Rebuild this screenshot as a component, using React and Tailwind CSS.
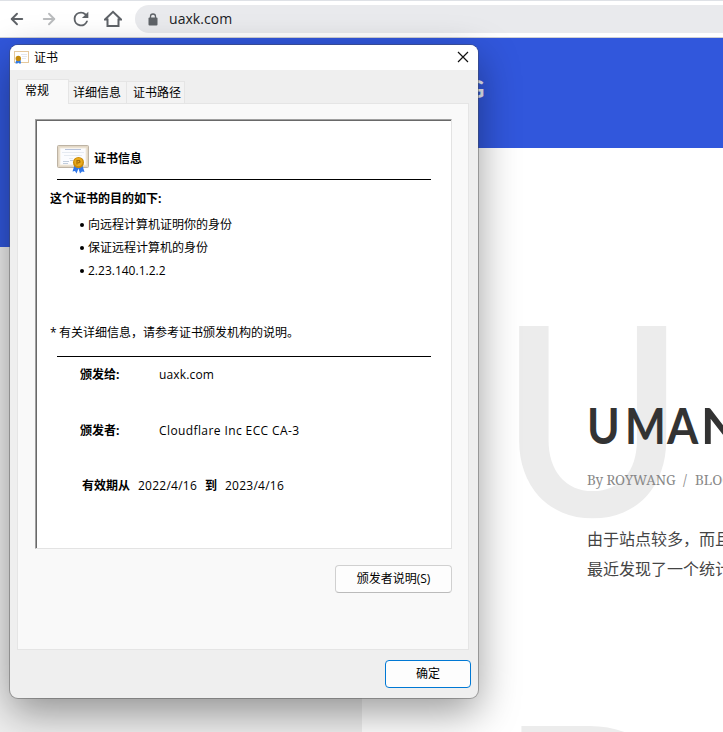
import { ArrowLeft, ArrowRight } from "lucide-react";

const purposes = ["向远程计算机证明你的身份", "保证远程计算机的身份", "2.23.140.1.2.2"];

function CertIcon({ className }) {
  return (
    <svg viewBox="0 0 32 29" className={className}>
      <rect x="0.5" y="0.5" width="31" height="22" rx="1" fill="#e3d8c6" stroke="#bdb3a4" />
      <rect x="3" y="3" width="26" height="17" fill="#fbfcff" stroke="#f3ece0" />
      <path d="M8 4.5h16" stroke="#a5b2d2" strokeWidth="0.8" />
      <path d="M5 7.5h22M7 10.5h18M12 13.500h4" stroke="#dfe4ee" strokeWidth="0.800" />
      <path d="M6 16.500h6M6 18.500h5M13 15.500h3" stroke="#b3c0d3" strokeWidth="0.800" />
      <path d="M17.500 20 15.500 26.500l2.500-.5 1.500 2.500 2-5 1.500 5 2-2 2.500.5-2-6.500z" fill="#2f76e8" />
      <circle cx="21.500" cy="17.500" r="5.500" fill="#c98a08" />
      <circle cx="21.500" cy="17" r="4.200" fill="#e8a91c" />
      <path d="M20 19.500v-4h2.500l.5 1.500-2 1" fill="none" stroke="#a56d05" strokeWidth="1.200" />
    </svg>
  );
}

function SmallCertIcon() {
  return (
    <svg viewBox="0 0 15 13" className="w-[15px] h-[13px]">
      <rect x="0.5" y="0.5" width="14" height="11" fill="#fff" stroke="#e5c89b" />
      <path d="M7 3.500h6M8 5.500h5M8 7.500h4" stroke="#e3e7ee" />
      <path d="M2 9.500 1.500 12.500h2l.8-1 .7 1h2l-.5-4z" fill="#2f7be8" />
      <circle cx="4.300" cy="7.500" r="2.700" fill="#c58a0a" />
    </svg>
  );
}

function Toolbar() {
  return (
    <header className="flex items-center h-[38px] shrink-0 pl-2 bg-white border-t border-t-[#dee1e6] border-b border-b-[#cfd0d3] text-[#5f6368]">
      <ArrowLeft className="w-[18px] h-[18px]" strokeWidth={2.5} />
      <ArrowRight className="w-[18px] h-[18px] ml-[14px] text-[#babcbe]" strokeWidth={2.5} />
      <svg viewBox="0 0 24 24" className="w-[22px] h-[22px] ml-[12px]" fill="currentColor">
        <path d="M17.650 6.350A7.960 7.960 0 0 0 12 4a8 8 0 1 0 7.730 10h-2.080A6 6 0 1 1 12 6c1.660 0 3.140.69 4.220 1.780L13 11h7V4z" />
      </svg>
      <svg viewBox="0 0 18 18" className="w-[18px] h-[18px] ml-[12px]" fill="none" stroke="currentColor" strokeWidth="2">
        <path d="M1 9.500 9 1.800l8 7.700h-2.500V16h-11V9.500z" />
      </svg>
      <div className="flex items-center flex-1 h-7 ml-[13px] pl-[13px] rounded-l-full bg-[#e9eaed]">
        <svg viewBox="0 0 10 13" className="w-[10px] h-[13px]">
          <rect x="0.500" y="4.500" width="9" height="8" rx="1" fill="#5f6368" />
          <path d="M2.500 5V3.500a2.500 2.500 0 0 1 5 0V5" fill="none" stroke="#5f6368" strokeWidth="1.300" />
        </svg>
        <span className="ml-[11px] text-[14px] leading-5 tracking-[0.05px] text-[#202124] font-['Open_Sans',sans-serif]">uaxk.com</span>
      </div>
    </header>
  );
}

function Article() {
  return (
    <main className="relative flex-1 ml-[362px] h-[584px] bg-white overflow-hidden whitespace-nowrap">
      {/* drop caps sit behind the post text */}
      <span className="absolute left-[138px] top-[134px] origin-left scale-x-[0.95] text-[264px] leading-[264px] font-semibold text-[#ececec] font-[Lato,sans-serif]">U</span>
      <span className="absolute left-[138px] top-[534px] origin-left scale-x-[0.95] text-[264px] leading-[264px] font-semibold text-[#ececec] font-[Lato,sans-serif]">D</span>
      <div className="relative pl-[225px] pt-[245px]">
        <h2 className="flex text-[49px] leading-[64px] font-bold text-[#333] font-[Lato,sans-serif]">
          <span className="w-[38px] shrink-0 origin-left scale-x-[0.9]">U</span>
          <span className="w-[42px] shrink-0 origin-left scale-x-[0.88]">M</span>
          <span className="w-[34px] shrink-0 origin-left scale-x-[0.92]">A</span>
          <span className="shrink-0">N</span>
        </h2>
        <div className="mt-[13px] flex text-[13.5px] leading-5 text-[#888] font-['Noto_Serif','Liberation_Serif',serif]">
          <span className="w-[96px] shrink-0 tracking-[-0.05px]">By ROYWANG</span>
          <span className="w-[12px] shrink-0">/</span>
          <span className="shrink-0">BLOG</span>
        </div>
        <p className="mt-[33px] text-[16px] leading-[30px] text-[#444] font-['Noto_Sans_CJK_SC',sans-serif]">
          由于站点较多，而且
          <br />
          最近发现了一个统计
        </p>
      </div>
    </main>
  );
}

function Field({ label, children, className }) {
  return (
    <div className={`flex h-5 pl-[43px] leading-5 ${className}`}>
      <b className="w-[79px]">{label}</b>
      {children}
    </div>
  );
}

function CertificateDialog() {
  return (
    <section className="absolute left-[10px] top-[45px] w-[468px] h-[653px] flex flex-col rounded-lg overflow-hidden bg-[#efefef] text-black text-[12px] font-['Open_Sans','Noto_Sans_CJK_SC',sans-serif] shadow-[0_0_0_1px_rgba(70,70,70,0.4),0_14px_40px_rgba(0,0,0,0.4)]">
      <div className="flex items-center h-[25px] pl-1 pr-[9px] bg-white shrink-0">
        <SmallCertIcon />
        <span className="ml-[5px] leading-5">证书</span>
        <svg viewBox="0 0 12 12" className="w-3 h-3 ml-auto -mt-px" stroke="#111" strokeWidth="1.200">
          <path d="m1 1 10 10M11 1 1 11" />
        </svg>
      </div>

      <div className="flex items-end h-[33px] shrink-0 pl-[7px]">
        <div className="relative z-10 w-[52px] h-[25px] -mb-px pl-[7px] leading-[22px] bg-[#f9f9f9] border border-b-0 border-[#e5e5e5]">常规</div>
        <div className="w-[58px] h-[22px] pl-[4px] leading-[22px] bg-[#f3f3f3] border border-b-0 border-l-0 border-[#e5e5e5]">详细信息</div>
        <div className="w-[58px] h-[22px] pl-[6px] leading-[22px] bg-[#f3f3f3] border border-b-0 border-l-0 border-[#e5e5e5]">证书路径</div>
      </div>

      <div className="ml-[7px] mr-[9px] h-[547px] shrink-0 bg-[#f9f9f9] border border-[#e5e5e5] pl-[17px] pr-4 pt-[15px]">
        <div className="w-[417px] h-[430px] border border-t-[#a0a0a0] border-l-[#a0a0a0] border-r-[#e3e3e3] border-b-[#e3e3e3]">
          <div className="h-full bg-white border-t border-l border-[#696969]">
            <div className="flex ml-5 w-[374px] h-[59px] pt-[24px] border-b border-black">
              <CertIcon className="w-8 h-[29px]" />
              <b className="ml-[5px] mt-[4px] leading-5">证书信息</b>
            </div>
            <b className="block pl-[13px] mt-[9px] leading-5">这个证书的目的如下:</b>
            <ul className="pl-[43px] mt-[4px] leading-[23px]">
              {purposes.map((text) => (
                <li key={text} className="flex items-center gap-[4px]">
                  <i className="block w-1 h-1 rounded-full bg-black" />
                  {text}
                </li>
              ))}
            </ul>
            <p className="pl-[13px] mt-[41px] leading-5">
              <span className="inline-block w-[9px]">*</span>有关详细信息，请参考证书颁发机构的说明。
            </p>
            <hr className="ml-5 w-[374px] mt-[13px] border-black" />
            <Field label="颁发给:" className="mt-[8px]">
              <span className="tracking-[0.15px]">uaxk.com</span>
            </Field>
            <Field label="颁发者:" className="mt-[36px]">
              <span className="tracking-[0.4px]">Cloudflare Inc ECC CA-3</span>
            </Field>
            <div className="flex mt-[35px] pl-[45px] leading-5">
              <b className="w-14">有效期从</b>
              <span className="w-[67px] tracking-[0.25px]">2022/4/16</span>
              <b className="w-5">到</b>
              <span className="tracking-[0.25px]">2023/4/16</span>
            </div>
          </div>
        </div>
        <button className="block ml-auto mt-4 w-[117px] h-7 rounded bg-[#fdfdfd] border border-[#d0d0d0] border-b-[#bbb]">颁发者说明(S)</button>
      </div>

      <button className="self-end mt-[10px] mr-[7px] w-[86px] h-7 shrink-0 rounded bg-[#fdfdfd] border border-[#0078d4]">确定</button>
    </section>
  );
}

export default function App() {
  return (
    <div className="relative flex flex-col w-[723px] h-[732px] overflow-hidden bg-[#efefef]">
      <Toolbar />
      <div className="h-[209px] shrink-0 bg-[#3157dc]">
        <div className="h-[110px] flex items-center pl-[467px] pb-2">
          <span className="text-[24px] leading-8 font-bold text-[#e9ecf5] font-[Lato,sans-serif]">G</span>
        </div>
      </div>
      <div className="-mt-[99px] flex">
        <Article />
      </div>
      <CertificateDialog />
    </div>
  );
}
